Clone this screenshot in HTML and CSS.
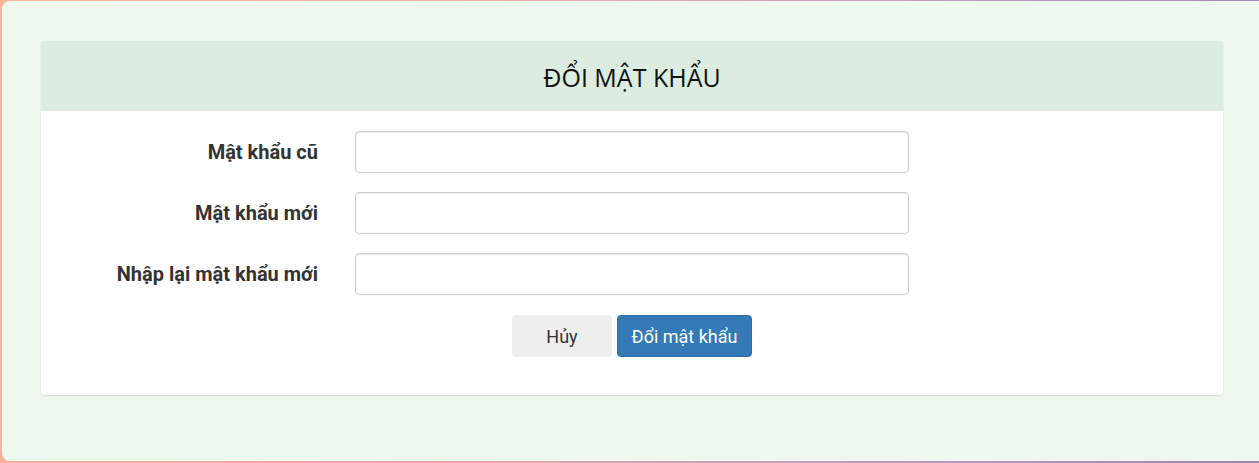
FILE: index.html
```html
<!DOCTYPE html>
<html lang="vi">
<head>
<meta charset="utf-8">
<link rel="stylesheet" href="styles.css">
</head>
<body>
<div class="frame">
  <div class="page">
    <div class="panel">
      <div class="panel-head">ĐỔI MẬT KHẨU</div>
      <form class="panel-body">
        <div class="row">
          <label class="lbl">Mật khẩu cũ</label>
          <input class="inp" type="password">
        </div>
        <div class="row">
          <label class="lbl">Mật khẩu mới</label>
          <input class="inp" type="password">
        </div>
        <div class="row">
          <label class="lbl">Nhập lại mật khẩu mới</label>
          <input class="inp" type="password">
        </div>
        <div class="actions">
          <button type="button" class="btn btn-cancel">Hủy</button>
          <button type="button" class="btn btn-primary">Đổi mật khẩu</button>
        </div>
      </form>
    </div>
  </div>
</div>
</body>
</html>
```
FILE: styles.css
```css
* { box-sizing: border-box; }
html, body { margin: 0; padding: 0; }
body {
  width: 1259px;
  height: 463px;
  overflow: hidden;
  font-family: Roboto, "Liberation Sans", sans-serif;
}
.frame {
  height: 463px;
  padding: 1px 0 2px 2px;
  background: linear-gradient(100deg, #fbb59c 0%, #e6a8b0 45%, #b894c4 80%, #9a84b8 100%);
}
.page {
  height: 460px;
  background: #eef8ef;
  border-radius: 8px 0 0 8px;
  padding: 40px 36px 0 39px;
}
.panel {
  background: #fff;
  border-radius: 3px;
  box-shadow: 0 1px 2px rgba(0,0,0,0.12);
}
.panel-head {
  height: 70px;
  background: #dcece0;
  border-radius: 3px 3px 0 0;
  display: flex;
  align-items: center;
  justify-content: center;
  font-family: "Open Sans", Roboto, sans-serif;
  font-size: 25px;
  color: #111;
  padding-top: 2px;
}
.panel-body {
  padding: 20px 0 38px;
  margin: 0;
}
.row {
  display: grid;
  grid-template-columns: 277px 554px;
  column-gap: 37px;
  align-items: center;
  margin-bottom: 19px;
}
.lbl {
  text-align: right;
  font-weight: 700;
  font-size: 20px;
  color: #333;
}
.inp {
  height: 42px;
  border: 1px solid #ccc;
  border-radius: 4px;
  background: #fff;
  box-shadow: inset 0 1px 1px rgba(0,0,0,0.075);
}
.actions {
  display: flex;
  justify-content: center;
  gap: 5px;
  padding-top: 1px;
}
.btn {
  height: 42px;
  border-radius: 4px;
  font-family: Roboto, sans-serif;
  font-size: 18px;
  border: 1px solid transparent;
  padding: 0;
}
.btn-cancel {
  width: 100px;
  background: #eeeeee;
  border-color: #eeeeee;
  color: #333;
}
.btn-primary {
  width: 135px;
  background: #337ab7;
  border-color: #2e6da4;
  color: #fff;
}
```
